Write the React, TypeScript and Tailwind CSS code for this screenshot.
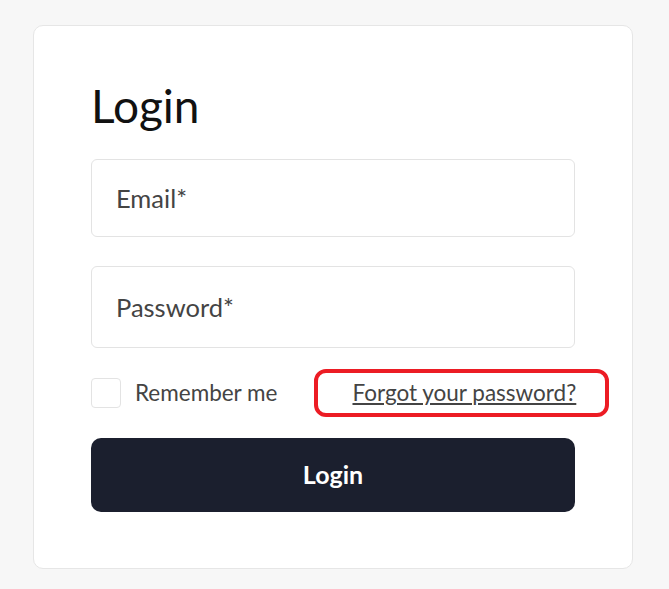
import React from 'react';

export default function App() {
  return (
    <div className="min-h-[589px] w-full bg-[#f7f7f7] pt-[25px] pl-[33px] font-['Lato',sans-serif]">
      <div className="w-[600px] h-[544px] bg-white border border-[#e6e6e6] rounded-[10px] px-[57px] pt-[57px]">
        {/* Title */}
        <h1 className="text-[46px] leading-none text-[#111] font-normal">Login</h1>

        {/* Fields */}
        <div className="mt-[30px] flex flex-col gap-[29px]">
          <div className="h-[78px] border border-[#e3e3e3] rounded-[6px] flex items-center px-[24px]">
            <span className="text-[25.5px] text-[#444]">Email*</span>
          </div>
          <div className="h-[82px] border border-[#e3e3e3] rounded-[6px] flex items-center px-[24px]">
            <span className="text-[25.5px] text-[#444]">Password*</span>
          </div>
        </div>

        {/* Options */}
        <div className="mt-[30px] h-[30px] flex items-center whitespace-nowrap">
          <div className="shrink-0 w-[30px] h-[30px] border border-[#e3e3e3] rounded-[4px]" />
          <span className="shrink-0 ml-[14px] text-[22.5px] text-[#444]">Remember me</span>
          <div className="shrink-0 ml-[37px] border-4 border-[#ec1c24] rounded-[12px] pl-[34px] pr-[29px] py-[3px]">
            <a href="#" className="text-[22.5px] text-[#444] underline underline-offset-2">
              Forgot your password?
            </a>
          </div>
        </div>

        {/* Submit */}
        <button className="mt-[30px] w-full h-[74px] bg-[#1b1f2e] rounded-[10px] text-white text-[25px] font-bold">
          Login
        </button>
      </div>
    </div>
  );
}
